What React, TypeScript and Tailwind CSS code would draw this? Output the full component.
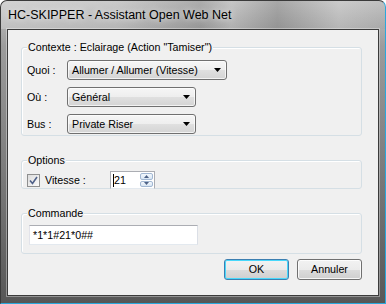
import React from "react";

const font = "font-['Liberation_Sans',Arial,sans-serif]";

function GroupBox({ label, className, children }: { label: string; className?: string; children?: React.ReactNode }) {
  return (
    <div className={`relative w-[341px] border border-[#d5dfe5] rounded-[3px] shadow-[inset_1px_1px_0_#fff] ${className ?? ""}`}>
      {/* legend sitting on the border */}
      <span className="absolute -top-[7px] left-[5px] bg-[#f0f0f0] px-[1px] leading-[13px]">{label}</span>
      {children}
    </div>
  );
}

function Combo({ value, width }: { value: string; width: string }) {
  return (
    <div
      className={`${width} h-[20px] flex items-center justify-between pl-[4px] pr-[4px] border border-[#707070] rounded-[3px] bg-[linear-gradient(180deg,#f6f6f6_0%,#eeeeee_50%,#e0e0e0_50%,#d4d4d4_100%)] shadow-[inset_0_0_0_1px_rgba(255,255,255,0.7)]`}
    >
      <span className="leading-none">{value}</span>
      <svg width="7" height="4" viewBox="0 0 7 4" className="mr-[1px]">
        <path d="M0 0h7L3.5 4z" fill="#000" />
      </svg>
    </div>
  );
}

function Button({ label, primary }: { label: string; primary?: boolean }) {
  return (
    <button
      className={`w-[65px] h-[21px] rounded-[3px] border leading-none text-black bg-[linear-gradient(180deg,#f2f2f2_0%,#ebebeb_50%,#dddddd_50%,#cfcfcf_100%)] ${
        primary
          ? "border-[#3c7fb1] shadow-[inset_0_0_0_1px_#48d8fb]"
          : "border-[#707070] shadow-[inset_0_0_0_1px_rgba(255,255,255,0.8)]"
      }`}
    >
      {label}
    </button>
  );
}

export default function App() {
  return (
    <div
      className={`${font} text-[10.7px] text-black w-[386px] h-[304px] flex flex-col overflow-hidden rounded-t-[7px] border border-[#3a3a3a] border-r-[#2aa8dc] border-b-[#2aa8dc] bg-[linear-gradient(180deg,#c4c4c4_0%,#9c9c9c_15%,#7c7c7c_55%,#575757_100%)]`}
    >
      {/* Title bar */}
      <div className="h-[28px] shrink-0 flex items-center pl-[7px] bg-[linear-gradient(90deg,rgba(255,255,255,0.25)_0%,rgba(255,255,255,0.12)_30%,rgba(0,0,0,0.12)_52%,rgba(255,255,255,0.05)_60%,rgba(0,0,0,0.14)_72%,rgba(255,255,255,0.12)_88%,rgba(0,0,0,0.02)_100%)]">
        <span className="text-[12.5px] [text-shadow:0_0_6px_rgba(255,255,255,0.9)]">HC-SKIPPER - Assistant Open Web Net</span>
      </div>

      {/* Client area */}
      <div className="mx-[6px] h-[267px] border border-[#3b3b3b] bg-[#f0f0f0] shadow-[0_0_0_1px_rgba(255,255,255,0.35)] pl-[13px] pt-[17px] flex flex-col">
        <GroupBox label={'Contexte : Eclairage (Action "Tamiser")'} className="h-[89px]">
          <div className="grid grid-cols-[40px_auto] items-center gap-y-[7px] pl-[5px] pt-[12px] justify-start">
            <span>Quoi :</span>
            <Combo value="Allumer / Allumer (Vitesse)" width="w-[160px]" />
            <span>Où :</span>
            <Combo value="Général" width="w-[129px]" />
            <span>Bus :</span>
            <Combo value="Private Riser" width="w-[129px]" />
          </div>
        </GroupBox>

        <GroupBox label="Options" className="h-[29px] mt-[24px]">
          <div className="flex items-center pl-[5px] pt-[10px]">
            <div className="w-[13px] h-[13px] border border-[#8e8f8f] bg-[linear-gradient(135deg,#dcdcdc,#fbfbfb)] flex items-center justify-center">
              <svg width="9" height="9" viewBox="0 0 9 9">
                <path d="M1 4.5 L3.5 7.5 L8 1" stroke="#4f6189" strokeWidth="1.6" fill="none" />
              </svg>
            </div>
            <span className="ml-[5px] w-[65px]">Vitesse :</span>
            <div className="flex h-[18px] border border-[#abadb3] border-b-[#e3e9ef] bg-white">
              <div className="w-[28px] flex items-center pl-[2px]">
                <span className="w-px h-[13px] bg-black" />
                <span className="leading-none">21</span>
              </div>
              <div className="w-[15px] flex flex-col gap-px p-px">
                <div className="flex-1 rounded-[2px] border border-[#a2b8d3] bg-[linear-gradient(180deg,#f3f8fd,#d8e6f4)] flex items-center justify-center">
                  <svg width="5" height="3" viewBox="0 0 5 3"><path d="M0 3h5L2.5 0z" fill="#4d6185" /></svg>
                </div>
                <div className="flex-1 rounded-[2px] border border-[#a2b8d3] bg-[linear-gradient(180deg,#f3f8fd,#d8e6f4)] flex items-center justify-center">
                  <svg width="5" height="3" viewBox="0 0 5 3"><path d="M0 0h5L2.5 3z" fill="#4d6185" /></svg>
                </div>
              </div>
            </div>
          </div>
        </GroupBox>

        <GroupBox label="Commande" className="h-[41px] mt-[24px]">
          <div className="pl-[7px] pt-[11px]">
            <div className="w-[169px] h-[20px] border border-[#abadb3] border-b-[#e3e9ef] border-l-[#e2e3ea] border-r-[#dbdfe6] bg-white flex items-center pl-[3px]">
              *1*1#21*0##
            </div>
          </div>
        </GroupBox>

        <div className="w-[341px] flex justify-end gap-[8px] mt-[5px]">
          <Button label="OK" primary />
          <Button label="Annuler" />
        </div>
      </div>
    </div>
  );
}
